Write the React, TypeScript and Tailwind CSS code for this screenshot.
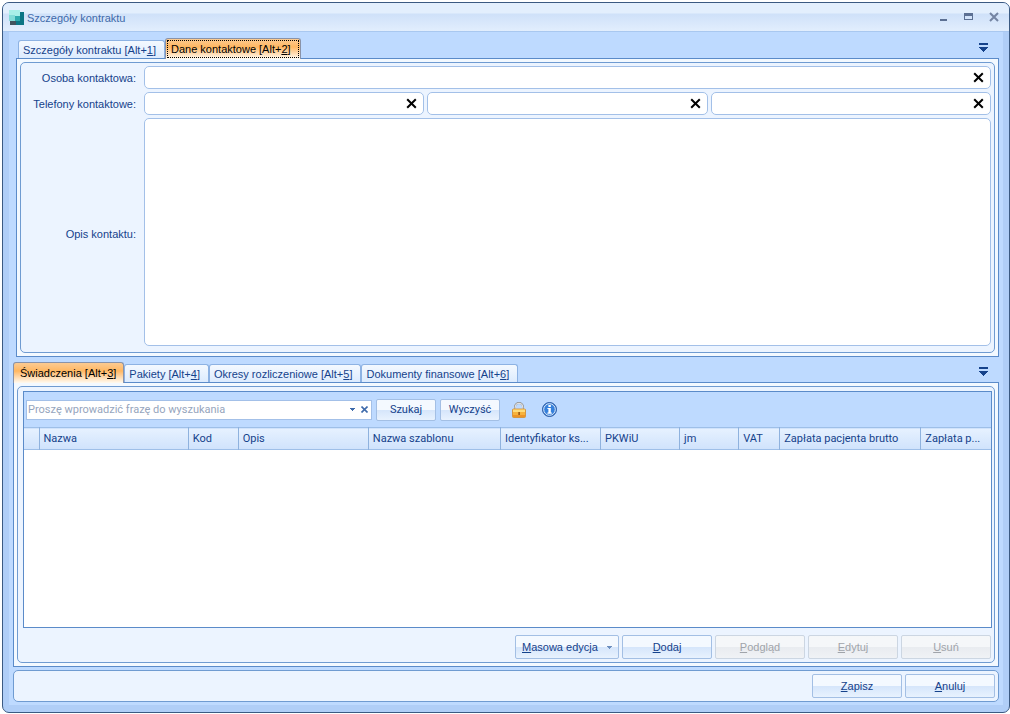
import type { ButtonHTMLAttributes, ReactNode } from "react";
import clsx from "clsx";

const columns = [
  { title: "", width: 15 },
  { title: "Nazwa", width: 149 },
  { title: "Kod", width: 50 },
  { title: "Opis", width: 130 },
  { title: "Nazwa szablonu", width: 132 },
  { title: "Identyfikator ks...", width: 100 },
  { title: "PKWiU", width: 79 },
  { title: "jm", width: 59 },
  { title: "VAT", width: 41 },
  { title: "Zapłata pacjenta brutto", width: 141 },
  { title: "Zapłata p...", width: 70 },
];

function ClearIcon() {
  return (
    <svg width="11" height="11" viewBox="0 0 11 11" aria-hidden="true">
      <path d="M1.2 1.2 L9.8 9.8 M9.8 1.2 L1.2 9.8" stroke="#000" strokeWidth="2" />
    </svg>
  );
}

function TabMenuButton() {
  return (
    <button type="button" aria-label="Lista zakładek" className="mr-[11px] mb-[6px] self-end">
      <svg width="9" height="9" viewBox="0 0 9 9" shapeRendering="crispEdges" aria-hidden="true">
        <path d="M0 0h9v2H0z M0 4h9v1H8v1H7v1H6v1H5v1H4V8H3V7H2V6H1V5H0z" fill="#15428b" />
      </svg>
    </button>
  );
}

function Logo() {
  return (
    <svg width="16" height="16" viewBox="0 0 16 16" aria-hidden="true">
      <path d="M1 11h7v4H1z" fill="#41535e" />
      <path d="M7 2h8v13H7z" fill="#0b7584" />
      <path d="M0 0h11v11H0z" fill="#a9efe8" />
      <path d="M0 5h6v6H0z" fill="#83dcd8" />
      <path d="M6 6h5v5H6z" fill="#2fa9ac" />
    </svg>
  );
}

function LockIcon() {
  return (
    <svg width="14" height="16" viewBox="0 0 14 16" aria-hidden="true">
      <path d="M3 8V5a4 4 0 0 1 8 0v3" fill="none" stroke="#8f8f8f" strokeWidth="2" />
      <path d="M3.2 7V5a3.8 3.8 0 0 1 7.6 0v2" fill="none" stroke="#eeeeee" strokeWidth="1" />
      <rect x="0.5" y="7" width="13" height="8.5" rx="1" fill="#f7b23c" stroke="#d08a2a" strokeWidth="0.8" />
      <path d="M1 7.5h12v2.5H1z" fill="#ffdc7a" />
      <path d="M1 13h12v2H1z" fill="#ee9426" />
      <path d="M6.4 10h1.4v3H6.4z" fill="#8a4b10" />
    </svg>
  );
}

function InfoIcon() {
  return (
    <svg width="15" height="15" viewBox="0 0 15 15" aria-hidden="true">
      <circle cx="7.5" cy="7.5" r="7" fill="#2f6fc4" stroke="#2a5ca8" />
      <circle cx="7.5" cy="7.5" r="5.8" fill="#3580dc" stroke="#e3effc" />
      <path d="M6.4 3h2.4v2H6.4z M5.4 6h3.4v4.6h1v1.2H5.4v-1.2h1V7.1h-1z" fill="#fff" />
    </svg>
  );
}

type TabProps = { children: ReactNode; hotkey: number; active?: boolean; focused?: boolean };

function Tab({ children, hotkey, active, focused }: TabProps) {
  return (
    <button
      type="button"
      role="tab"
      aria-selected={!!active}
      className={clsx(
        "relative rounded-t-[3px] border border-b-0 text-left whitespace-nowrap",
        active
          ? "z-10 -mb-px h-[21px] border-[#8a93a8] bg-linear-to-b from-[#fbcb92] via-[#ffb761] via-40% to-[#fffaf0] text-black"
          : "h-[18px] border-[#8db2e3] bg-linear-to-b from-[#f4f9ff] to-[#dcebfe] text-[#15428b]",
      )}
    >
      <span
        className={clsx(
          "flex items-center pl-1",
          active ? "pr-[7px]" : "pr-2",
          active && !focused && "pl-[6px]",
          focused ? "m-px h-[18px] border border-dotted border-black pl-[3px]" : "h-full",
        )}
      >
        <span>
          {children} [Alt+<u>{hotkey}</u>]
        </span>
      </span>
    </button>
  );
}

function ClearableInput({ id, label }: { id?: string; label?: string }) {
  return (
    <div className="flex h-[23px] min-w-0 flex-1 items-center rounded-[5px] border border-[#a3c0e8] bg-white pr-[6px]">
      <input id={id} aria-label={label} type="text" className="h-full min-w-0 flex-1 bg-transparent px-1 outline-none" />
      <button type="button" aria-label="Wyczyść pole">
        <ClearIcon />
      </button>
    </div>
  );
}

function DialogButton({ className, disabled, ...props }: ButtonHTMLAttributes<HTMLButtonElement>) {
  return (
    <button
      type="button"
      disabled={disabled}
      className={clsx(
        "rounded-[2px] border",
        disabled
          ? "border-[#ccd6e2] bg-linear-to-b from-[#f5f7f9] from-48% via-[#e9ecf0] via-52% to-[#f0f2f5] text-[#a0a4aa]"
          : "border-[#a3bfe4] bg-linear-to-b from-[#f4f9ff] from-48% via-[#d6e6fb] via-52% to-[#e8f2fe] text-[#15428b]",
        className ?? "h-6 w-[90px]",
      )}
      {...props}
    />
  );
}

export default function App() {
  return (
    <div className="h-screen bg-white pt-[2px] pb-[1px] pl-[2px] font-['Liberation_Sans',Arial,sans-serif] text-[11px] leading-[14px] text-[#15428b]">
      <div className="flex h-full flex-col overflow-hidden rounded-[7px] border border-[#3b5a82] bg-[#b0cef7]">
        <header className="flex h-[29px] shrink-0 items-center border-b border-[#a9c8f0] bg-linear-to-b from-[#e3effd] from-35% via-[#cfe1f9] via-40% to-[#e2eefd] pt-[2px] pr-[10px] pl-[6px]">
          <Logo />
          <h1 className="ml-[2px] flex-1 text-[#3e6aaa]">Szczegóły kontraktu</h1>
          <div className="flex gap-[15px] pb-[2px] text-[#5c7093]">
            <button type="button" aria-label="Minimalizuj">
              <svg width="10" height="10" viewBox="0 0 10 10" shapeRendering="crispEdges">
                <path d="M1 7h7v2H1z" fill="currentColor" />
              </svg>
            </button>
            <button type="button" aria-label="Maksymalizuj">
              <svg width="10" height="10" viewBox="0 0 10 10" shapeRendering="crispEdges">
                <path d="M0 1h9v7H0z M1 4v3h7V4z" fill="currentColor" fillRule="evenodd" />
              </svg>
            </button>
            <button type="button" aria-label="Zamknij">
              <svg width="10" height="10" viewBox="0 0 10 10">
                <path d="M1 1 L9 9 M9 1 L1 9" stroke="#7484a2" strokeWidth="2" />
              </svg>
            </button>
          </div>
        </header>

        <main className="mx-[6px] mb-[7px] flex min-h-0 flex-1 flex-col bg-[#bedaff] px-1 pb-[3px]">
          <section className="mt-[6px] ml-[3px] flex shrink-0 flex-col">
            <div className="flex h-[20px] items-end justify-between pl-[2px]">
              <div role="tablist" className="flex items-end">
                <Tab hotkey={1}>Szczegóły kontraktu</Tab>
                <Tab hotkey={2} active focused>
                  Dane kontaktowe
                </Tab>
              </div>
              <TabMenuButton />
            </div>
            <div className="border border-[#5b8bc9] bg-[#f3f9ff] p-[3px]">
              <div className="grid grid-cols-[105px_1fr] items-center gap-x-2 gap-y-[3px] rounded-[5px] border border-[#6f9bd1] bg-[#ecf4ff] py-[3px] pr-[3px] pl-[10px]">
                <label htmlFor="person" className="text-right">
                  Osoba kontaktowa:
                </label>
                <ClearableInput id="person" />
                <label htmlFor="phone" className="text-right">
                  Telefony kontaktowe:
                </label>
                <div className="flex gap-[3px]">
                  <ClearableInput id="phone" />
                  <ClearableInput label="Telefon 2" />
                  <ClearableInput label="Telefon 3" />
                </div>
                <label htmlFor="description" className="text-right">
                  Opis kontaktu:
                </label>
                <textarea
                  id="description"
                  className="mb-[3px] block h-[228px] w-full resize-none rounded-[5px] border border-[#a3c0e8] bg-white p-1 outline-none"
                />
              </div>
            </div>
          </section>

          <section className="mt-[5px] flex min-h-0 flex-1 flex-col">
            <div className="flex h-[20px] shrink-0 items-end justify-between">
              <div role="tablist" className="flex items-end">
                <Tab hotkey={3} active>
                  Świadczenia
                </Tab>
                <Tab hotkey={4}>Pakiety</Tab>
                <Tab hotkey={5}>Okresy rozliczeniowe</Tab>
                <Tab hotkey={6}>Dokumenty finansowe</Tab>
              </div>
              <TabMenuButton />
            </div>
            <div className="flex min-h-0 flex-1 flex-col border border-[#5b8bc9] bg-[#f3f9ff] p-[3px]">
              <div className="flex min-h-0 flex-1 flex-col rounded-[5px] border border-[#6f9bd1] bg-[#ecf4ff] pt-1 pr-[2px] pb-[3px] pl-[5px]">
                <div className="flex min-h-0 flex-1 flex-col border border-[#5b8bc9] bg-white font-[Roboto,Tahoma,sans-serif]">
                  <div className="flex h-[35px] shrink-0 items-center gap-1 bg-[#bedaff] pl-[2px]">
                    <div className="flex h-5 w-[346px] items-center border border-[#a3c0e8] bg-white">
                      <input
                        type="text"
                        aria-label="Wyszukiwanie"
                        placeholder="Proszę wprowadzić frazę do wyszukania"
                        className="min-w-0 flex-1 px-px outline-none placeholder:text-[#96a5bd]"
                      />
                      <button type="button" aria-label="Historia wyszukiwania" className="mr-[6px]">
                        <svg width="5" height="3" viewBox="0 0 5 3" shapeRendering="crispEdges">
                          <path d="M0 0h5v1H4v1H3v1H2V2H1V1H0z" fill="#3f6bab" />
                        </svg>
                      </button>
                      <button type="button" aria-label="Wyczyść frazę" className="mr-[3px]">
                        <svg width="7" height="7" viewBox="0 0 7 7">
                          <path d="M0.5 0.5 L6.5 6.5 M6.5 0.5 L0.5 6.5" stroke="#3f6bab" strokeWidth="1.6" />
                        </svg>
                      </button>
                    </div>
                    <DialogButton className="h-[22px] w-[60px]">Szukaj</DialogButton>
                    <DialogButton className="h-[22px] w-[60px]">Wyczyść</DialogButton>
                    <button type="button" aria-label="Zablokuj" className="ml-2">
                      <LockIcon />
                    </button>
                    <button type="button" aria-label="Informacje" className="ml-3">
                      <InfoIcon />
                    </button>
                  </div>
                  <table className="w-full table-fixed border-collapse">
                    <colgroup>
                      {columns.map((column) => (
                        <col key={column.title} style={{ width: column.width }} />
                      ))}
                    </colgroup>
                    <thead>
                      <tr className="h-[22px] border-y border-[#9ebfe8] bg-linear-to-b from-[#e6f1ff] to-[#d0e3fc]">
                        {columns.map((column) => (
                          <th
                            key={column.title}
                            scope="col"
                            className="border-r border-[#8fb2de] px-1 pt-px text-left font-normal whitespace-nowrap last:border-r-0"
                          >
                            {column.title}
                          </th>
                        ))}
                      </tr>
                    </thead>
                    <tbody />
                  </table>
                </div>
                <div className="flex shrink-0 justify-end gap-[3px] pt-[7px] pr-px">
                  <DialogButton className="flex h-6 w-[104px] items-center justify-between px-[6px]">
                    <span>
                      <u>M</u>asowa edycja
                    </span>
                    <svg width="5" height="3" viewBox="0 0 5 3" shapeRendering="crispEdges">
                      <path d="M0 0h5v1H4v1H3v1H2V2H1V1H0z" fill="#6d8fbf" />
                    </svg>
                  </DialogButton>
                  <DialogButton>
                    <u>D</u>odaj
                  </DialogButton>
                  <DialogButton disabled>
                    <u>P</u>odgląd
                  </DialogButton>
                  <DialogButton disabled>
                    <u>E</u>dytuj
                  </DialogButton>
                  <DialogButton disabled>
                    <u>U</u>suń
                  </DialogButton>
                </div>
              </div>
            </div>
          </section>

          <footer className="mt-[3px] flex shrink-0 justify-end gap-[3px] rounded-[5px] border border-[#6f9bd1] bg-[#ecf4ff] py-[3px] pr-[3px]">
            <DialogButton>
              <u>Z</u>apisz
            </DialogButton>
            <DialogButton>
              <u>A</u>nuluj
            </DialogButton>
          </footer>
        </main>
      </div>
    </div>
  );
}
